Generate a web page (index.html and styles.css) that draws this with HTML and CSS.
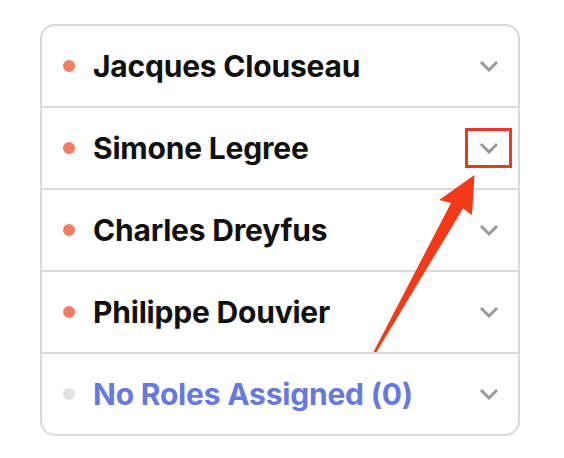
FILE: index.html
```html
<!DOCTYPE html>
<html>
<head>
<meta charset="utf-8">
<link rel="stylesheet" href="styles.css">
</head>
<body>
<div class="stage">
  <ul class="card">
    <li class="row"><span class="dot"></span><span class="name">Jacques Clouseau</span><svg class="chev" viewBox="0 0 20 12"><path d="M2 2 L10 10 L18 2"/></svg></li>
    <li class="row"><span class="dot"></span><span class="name">Simone Legree</span><span class="hl"><svg class="chev" viewBox="0 0 20 12"><path d="M2 2 L10 10 L18 2"/></svg></span></li>
    <li class="row"><span class="dot"></span><span class="name">Charles Dreyfus</span><svg class="chev" viewBox="0 0 20 12"><path d="M2 2 L10 10 L18 2"/></svg></li>
    <li class="row"><span class="dot"></span><span class="name">Philippe Douvier</span><svg class="chev" viewBox="0 0 20 12"><path d="M2 2 L10 10 L18 2"/></svg></li>
    <li class="row none"><span class="dot"></span><span class="name">No Roles Assigned (0)</span><svg class="chev" viewBox="0 0 20 12"><path d="M2 2 L10 10 L18 2"/></svg></li>
  </ul>
  <svg class="arrow" viewBox="0 0 564 458" width="564" height="458">
    <polygon points="373.5,352 376.5,352 463,208.5 472,215 474.5,175 439,200 451,203"/>
  </svg>
</div>
</body>
</html>
```
FILE: styles.css
```css
html, body {
  margin: 0;
  padding: 0;
  background: #ffffff;
}
.stage {
  position: relative;
  width: 564px;
  height: 458px;
  padding: 24px 0 0 40px;
  box-sizing: border-box;
}
.card {
  list-style: none;
  margin: 0;
  padding: 0;
  width: 480px;
  box-sizing: border-box;
  border: 2px solid #dadada;
  border-radius: 15px;
  font-family: Inter, "Liberation Sans", sans-serif;
}
.row {
  display: flex;
  align-items: center;
  height: 80px;
  padding: 0 19px 0 21px;
  border-top: 2px solid #dadada;
}
.row:first-child {
  border-top: none;
}
.dot {
  width: 12px;
  height: 12px;
  border-radius: 50%;
  background: #f47c63;
  flex: none;
}
.name {
  margin-left: 18px;
  font-size: 30px;
  font-weight: 700;
  color: #111111;
  flex: 1;
  letter-spacing: -0.2px;
}
.none .dot {
  background: #e2e2e2;
}
.none .name {
  color: #6679e0;
}
.chev {
  width: 20px;
  height: 12px;
  flex: none;
  fill: none;
  stroke: #9a9a9a;
  stroke-width: 3;
}
.hl {
  display: flex;
  align-items: center;
  justify-content: center;
  width: 47px;
  height: 40px;
  box-sizing: border-box;
  border: 3px solid #e83a22;
  margin-right: -13px;
  margin-left: -14px;
}
.arrow {
  position: absolute;
  left: 0;
  top: 0;
  fill: #f33a18;
}
```
